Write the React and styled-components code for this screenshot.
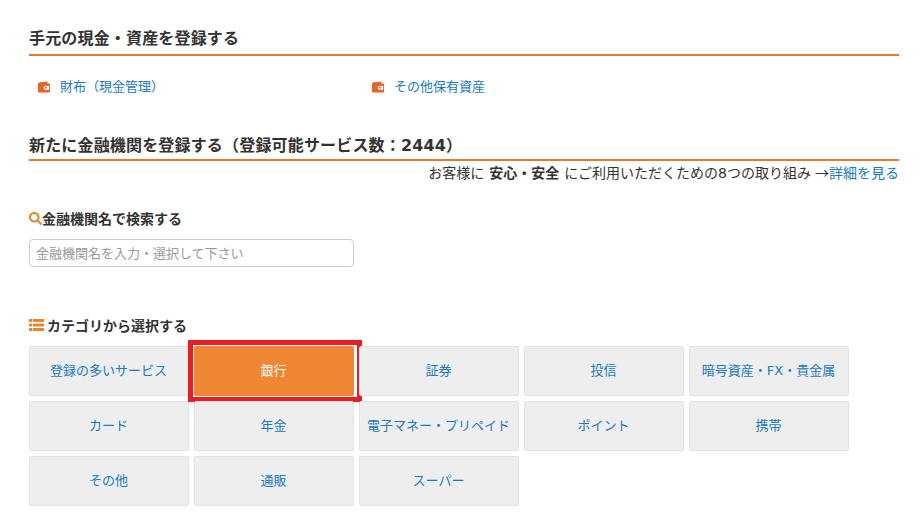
import React from "react"
import styled, { createGlobalStyle } from "styled-components"
import { FaSearch } from "react-icons/fa"

const GlobalStyle = createGlobalStyle`
  html, body {
    margin: 0;
    padding: 0;
    background: #fff;
    overflow: hidden;
  }
  body {
    font-family: "DejaVu Sans", "Noto Sans CJK JP", sans-serif;
    color: #333;
  }
`

const Page = styled.div`
  width: 870px;
  padding: 27px 23px 0 29px;
`

const Heading = styled.h2`
  margin: 0;
  height: ${(p) => (p.$tight ? 25 : 27)}px;
  line-height: 24px;
  font-size: 16px;
  font-weight: 700;
  letter-spacing: 0.17px;
  color: #333;
  border-bottom: 2px solid #e07b31;
  box-sizing: content-box;
`

const WalletRow = styled.div`
  display: flex;
  padding: 22px 0 0 9px;
  height: 18px;
  margin-bottom: 38px;
`

const WalletLink = styled.a`
  display: flex;
  align-items: center;
  gap: 10px;
  width: 334px;
  font-size: 13px;
  line-height: 18px;
  color: #1a7ac4;
  text-decoration: none;
`

const WalletSvg = styled.svg`
  width: 12px;
  height: 12px;
  flex: none;
`

const Note = styled.p`
  margin: 0;
  padding-top: 1px;
  text-align: right;
  font-size: 14px;
  line-height: 22px;
  color: #333;

  b {
    margin: 0 5px;
  }

  a {
    color: #1a7ac4;
    text-decoration: none;
  }
`

const Arrow = styled.span`
  font-family: "Noto Sans CJK JP", sans-serif;
  line-height: 0;
  margin-left: 4px;
`

const SubHeading = styled.h3`
  display: flex;
  align-items: center;
  gap: ${(p) => p.$gap}px;
  margin: 0;
  height: 20px;
  font-size: 14px;
  font-weight: 700;
  color: #333;

  svg {
    color: #e8852f;
    font-size: 13px;
    flex: none;
  }
`

const SearchBlock = styled.div`
  margin-top: 24px;
`

const SearchInput = styled.input`
  display: block;
  box-sizing: border-box;
  width: 325px;
  height: 28px;
  margin-top: 11px;
  padding: 0 6px;
  font: 13px "DejaVu Sans", "Noto Sans CJK JP", sans-serif;
  border: 1px solid #ccc;
  border-radius: 4px;
  outline: none;

  &::placeholder {
    color: #999;
    opacity: 1;
  }
`

const CategoryBlock = styled.div`
  margin-top: 48px;
`

const CategoryGrid = styled.div`
  display: grid;
  grid-template-columns: repeat(5, 160px);
  grid-auto-rows: 50px;
  gap: 5px;
  margin-top: 11px;
`

const CategoryButton = styled.a`
  position: relative;
  display: flex;
  align-items: center;
  justify-content: center;
  padding: 0 1px 4px 0;
  font-size: 13px;
  white-space: nowrap;
  text-decoration: none;
  border-radius: 2px;
  box-sizing: border-box;
  border: 1px solid ${(p) => (p.$active ? "#ee8632" : "#e2e2e2")};
  background: ${(p) => (p.$active ? "#ee8632" : "#eeeeee")};
  color: ${(p) => (p.$active ? "#fff" : "#1a7ac4")};
`

// 選択中のカテゴリを囲む赤枠
const Highlight = styled.span`
  position: absolute;
  top: -7px;
  left: -7px;
  width: 174px;
  height: 62px;
  box-sizing: border-box;
  border: 5px solid #ed1c24;
`

const WalletIcon = () => (
  <WalletSvg viewBox="0 0 12 12">
    <path
      fill="#e0682a"
      fillRule="evenodd"
      d="M3 1.2 L9.5 0.4 V2.4 H11 A1 1 0 0 1 12 3.4 V10.5 A1 1 0 0 1 11 11.5 H1.2 A1.2 1.2 0 0 1 0 10.3 V3.4 A2.4 2.4 0 0 1 3 1.2 Z M7.6 4.9 A1.9 1.9 0 0 0 7.6 8.7 H11.1 V4.9 Z"
    />
    <circle cx="8" cy="6.8" r="1" fill="#e0682a" />
  </WalletSvg>
)

const ListIcon = () => (
  <svg width="15" height="12" viewBox="0 0 15 12" fill="currentColor">
    <rect x="0" y="0" width="3" height="3" />
    <rect x="3.8" y="0" width="11.2" height="3" />
    <rect x="0" y="4.5" width="3" height="3" />
    <rect x="3.8" y="4.5" width="11.2" height="3" />
    <rect x="0" y="9" width="3" height="3" />
    <rect x="3.8" y="9" width="11.2" height="3" />
  </svg>
)

const categories = [
  "登録の多いサービス",
  "銀行",
  "証券",
  "投信",
  "暗号資産・FX・貴金属",
  "カード",
  "年金",
  "電子マネー・プリペイド",
  "ポイント",
  "携帯",
  "その他",
  "通販",
  "スーパー",
]

const App = () => {
  return (
    <Page>
      <GlobalStyle />
      <Heading>手元の現金・資産を登録する</Heading>
      <WalletRow>
        <WalletLink href="#">
          <WalletIcon />
          財布（現金管理）
        </WalletLink>
        <WalletLink href="#">
          <WalletIcon />
          その他保有資産
        </WalletLink>
      </WalletRow>

      <Heading $tight>新たに金融機関を登録する（登録可能サービス数：2444）</Heading>
      <Note>
        お客様に<b>安心・安全</b>にご利用いただくための8つの取り組み
        <Arrow>→</Arrow>
        <a href="#">詳細を見る</a>
      </Note>

      <SearchBlock>
        <SubHeading $gap={0}>
          <FaSearch />
          金融機関名で検索する
        </SubHeading>
        <SearchInput placeholder="金融機関名を入力・選択して下さい" />
      </SearchBlock>

      <CategoryBlock>
        <SubHeading $gap={3}>
          <ListIcon />
          カテゴリから選択する
        </SubHeading>
        <CategoryGrid>
          {categories.map((name) => (
            <CategoryButton href="#" key={name} $active={name === "銀行"}>
              {name}
              {name === "銀行" && <Highlight />}
            </CategoryButton>
          ))}
        </CategoryGrid>
      </CategoryBlock>
    </Page>
  )
}

export default App
